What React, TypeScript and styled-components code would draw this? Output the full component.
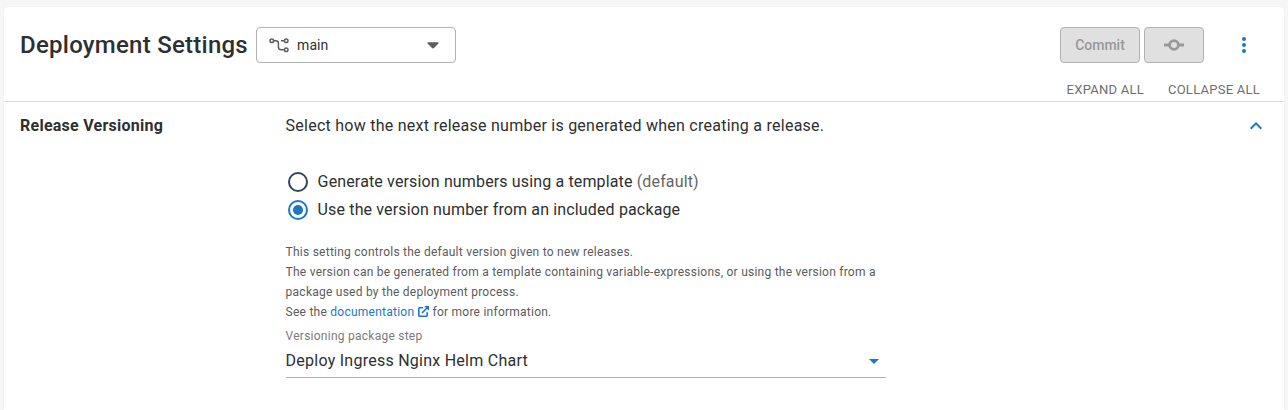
import React, { useState } from "react";
import styled, { createGlobalStyle } from "styled-components";

const GlobalStyle = createGlobalStyle`
  * { box-sizing: border-box; }
  body {
    margin: 0;
    background: #f6f6f6;
    color: #2e2f30;
    font-family: Roboto, "Liberation Sans", sans-serif;
    overflow: hidden;
  }
  svg { display: block; flex: none; }
`;

const Page = styled.main`
  height: 410px;
  padding: 7px 4px 0;
`;

const Panel = styled.section`
  height: 403px;
  background: #fff;
  border-radius: 4px 4px 0 0;
  box-shadow: 0 0 2px rgba(0, 0, 0, 0.06);
`;

const Header = styled.header`
  height: 95px;
  padding: 20px 24px 0 16px;
  border-bottom: 1px solid #dadada;
`;

const Toolbar = styled.div`
  display: flex;
  align-items: center;
  height: 36px;
`;

const Title = styled.h1`
  width: 236px;
  margin: 0;
  font-size: 24px;
  font-weight: 500;
  line-height: 32px;
  letter-spacing: 0.25px;
  white-space: nowrap;
`;

const BranchPicker = styled.button`
  display: flex;
  align-items: center;
  width: 200px;
  height: 36px;
  padding: 0 16px 0 12px;
  border: 1px solid #b2b2b2;
  border-radius: 4px;
  background: #fff;
  color: #2e2f30;
  font: 400 14px/20px Roboto, sans-serif;
  letter-spacing: 0.1px;
`;

const BranchName = styled.span`
  flex: 1;
  margin-left: 8px;
  text-align: left;
`;

const Actions = styled.div`
  display: flex;
  align-items: center;
  gap: 4px;
  margin-left: auto;
`;

const ActionButton = styled.button<{ $width: number }>`
  display: flex;
  align-items: center;
  justify-content: center;
  width: ${(p) => p.$width}px;
  height: 36px;
  padding: 0;
  border: 1px solid #b2b2b2;
  border-radius: 4px;
  background: #e0e0e0;
  color: #999;
  font: 500 14px/20px Roboto, sans-serif;
  letter-spacing: 0;
`;

const MenuButton = styled.button`
  display: flex;
  justify-content: center;
  width: 32px;
  margin-left: 20px;
  padding: 0;
  border: 0;
  background: none;
  color: #1a77ca;
`;

const ExpandBar = styled.div`
  display: flex;
  justify-content: flex-end;
  gap: 24px;
  padding-top: 17px;
`;

const TextButton = styled.button`
  padding: 0;
  border: 0;
  background: none;
  color: #6e6e6e;
  font: 400 13px/20px Roboto, sans-serif;
  letter-spacing: 0.25px;
  text-transform: uppercase;
`;

const Setting = styled.section`
  display: grid;
  grid-template-columns: 265.6px 600px 1fr;
  padding: 12px 20px 0 16px;
`;

const SettingName = styled.h2`
  margin: 0;
  font-size: 16px;
  font-weight: 700;
  line-height: 24px;
  letter-spacing: 0.25px;
`;

const Summary = styled.p`
  margin: 0 0 30px;
  font-size: 16px;
  line-height: 24px;
  letter-spacing: 0.25px;
`;

const CollapseButton = styled.button`
  justify-self: end;
  align-self: start;
  padding: 8px 2px 0;
  border: 0;
  background: none;
  color: #1a77ca;
`;

const Option = styled.label`
  display: flex;
  align-items: center;
  height: 28px;
  padding-left: 2px;
  font-size: 16px;
  line-height: 24px;
  letter-spacing: 0.144px;
`;

const Radio = styled.input`
  appearance: none;
  display: grid;
  place-content: center;
  width: 20px;
  height: 20px;
  margin: 0 10px 0 0;
  border: 2px solid #2e475d;
  border-radius: 50%;

  &:checked { border-color: #1a77ca; }
  &:checked::before {
    content: "";
    width: 10px;
    height: 10px;
    border-radius: 50%;
    background: #1a77ca;
  }
`;

const Muted = styled.span`
  color: #666;
`;

const Help = styled.p`
  margin: 18px 0 0;
  color: #5c5c5c;
  font-size: 12px;
  line-height: 20px;
  letter-spacing: 0.245px;
`;

const DocLink = styled.a`
  color: #1a77ca;
  text-decoration: none;

  svg {
    display: inline-block;
    margin: 0 0 0 4px;
    vertical-align: -1px;
  }
`;

const FieldLabel = styled.div`
  margin-top: 6px;
  color: #7c7c7c;
  font-size: 12px;
  line-height: 16px;
  letter-spacing: 0.25px;
`;

const SelectField = styled.div`
  display: flex;
  align-items: center;
  justify-content: space-between;
  height: 34px;
  padding-right: 7px;
  border-bottom: 1px solid #b0b0b0;
  font-size: 16px;
  line-height: 24px;
  letter-spacing: 0.25px;

  svg { margin-top: 2px; }
`;

const BranchIcon = () => (
  <svg width="20" height="16" viewBox="0 0 20 16" fill="none" stroke="#5f5f5f" strokeWidth="1.5">
    <circle cx="2.8" cy="3.7" r="1.8" />
    <circle cx="17.2" cy="3.7" r="1.8" />
    <circle cx="17.2" cy="12.7" r="1.8" />
    <path d="M4.7 3.7h2.1c1.7 0 2.6.9 2.6 2.5v3.5c0 2 1 3 2.8 3h3.1M12 3.7h3.3" />
  </svg>
);

const CommitIcon = () => (
  <svg width="20" height="14" viewBox="0 0 20 14" fill="none" stroke="currentColor" strokeWidth="2.8">
    <circle cx="10" cy="7" r="4.4" />
    <path d="M0 7h5.5M14.5 7H20" />
  </svg>
);

const DotsIcon = () => (
  <svg width="4" height="16" viewBox="0 0 4 16" fill="currentColor">
    <circle cx="2" cy="2" r="2" />
    <circle cx="2" cy="8" r="2" />
    <circle cx="2" cy="14" r="2" />
  </svg>
);

const ChevronUp = () => (
  <svg width="12" height="8" viewBox="0 0 12 8" fill="none" stroke="currentColor" strokeWidth="2">
    <path d="M.7 6.7 6 1.4l5.3 5.3" />
  </svg>
);

const ExternalIcon = () => (
  <svg width="11" height="11" viewBox="0 0 11 11" fill="none" stroke="currentColor" strokeWidth="1.6">
    <path d="M5.2 1.8H1.6a.8.8 0 0 0-.8.8v6.8c0 .4.4.8.8.8h6.8c.4 0 .8-.4.8-.8V6.2M4 7l5-5" />
    <path d="M6.2 0H11v4.8Z" fill="currentColor" stroke="none" />
  </svg>
);

const options = [
  { id: "template", text: "Generate version numbers using a template", note: "(default)" },
  { id: "package", text: "Use the version number from an included package", note: "" },
];

export default function App() {
  const [source, setSource] = useState("package");

  return (
    <>
      <GlobalStyle />
      <Page>
        <Panel>
          <Header>
            <Toolbar>
              <Title>Deployment Settings</Title>
              <BranchPicker>
                <BranchIcon />
                <BranchName>main</BranchName>
                <svg width="12" height="7" viewBox="0 0 12 7" fill="#5c5c5c">
                  <path d="M1.2.3h9.6c.8 0 1.1.8.6 1.3L7 6.1c-.6.6-1.4.6-2 0L.6 1.6C.1 1.1.4.3 1.2.3Z" />
                </svg>
              </BranchPicker>
              <Actions>
                <ActionButton $width={80} disabled>Commit</ActionButton>
                <ActionButton $width={60} disabled aria-label="Commit options">
                  <CommitIcon />
                </ActionButton>
                <MenuButton aria-label="More">
                  <DotsIcon />
                </MenuButton>
              </Actions>
            </Toolbar>
            <ExpandBar>
              <TextButton>Expand all</TextButton>
              <TextButton>Collapse all</TextButton>
            </ExpandBar>
          </Header>
          <Setting>
            <SettingName>Release Versioning</SettingName>
            <div>
              <Summary>Select how the next release number is generated when creating a release.</Summary>
              {options.map((o) => (
                <Option key={o.id}>
                  <Radio
                    type="radio"
                    name="source"
                    checked={source === o.id}
                    onChange={() => setSource(o.id)}
                  />
                  <span>
                    {o.text} {o.note && <Muted>{o.note}</Muted>}
                  </span>
                </Option>
              ))}
              <Help>
                This setting controls the default version given to new releases.
                <br />
                The version can be generated from a template containing variable-expressions, or using the
                version from a package used by the deployment process.
                <br />
                See the{" "}
                <DocLink href="#">
                  documentation
                  <ExternalIcon />
                </DocLink>{" "}
                for more information.
              </Help>
              <FieldLabel>Versioning package step</FieldLabel>
              <SelectField>
                Deploy Ingress Nginx Helm Chart
                <svg width="10" height="5" viewBox="0 0 10 5" fill="#1a77ca">
                  <path d="M0 0h10L5 5Z" />
                </svg>
              </SelectField>
            </div>
            <CollapseButton aria-label="Collapse">
              <ChevronUp />
            </CollapseButton>
          </Setting>
        </Panel>
      </Page>
    </>
  );
}
